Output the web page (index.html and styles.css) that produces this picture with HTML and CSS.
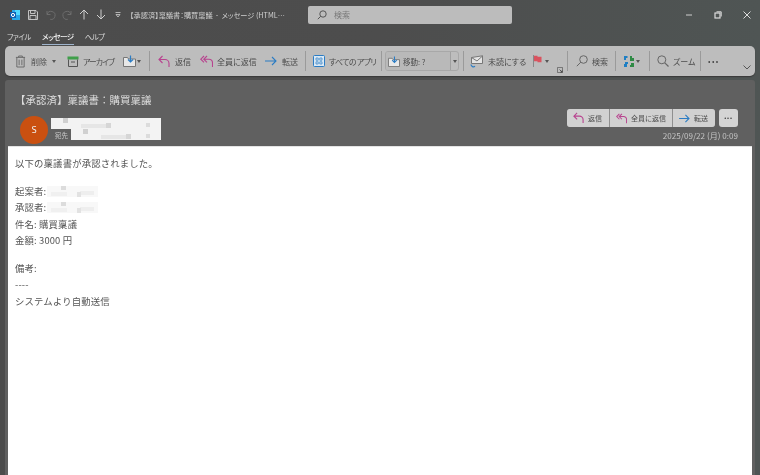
FILE: index.html
```html
<!DOCTYPE html>
<html lang="ja">
<head>
<meta charset="utf-8">
<title>【承認済】稟議書：購買稟議</title>
<link rel="stylesheet" href="styles.css">
</head>
<body>
<div class="window">
  <header class="titlebar">
    <div class="qat">
      <svg class="ol" viewBox="0 0 10 10" width="10" height="10"><rect x="2" y="0" width="8" height="10" fill="#28a8ea"/><rect x="5" y="0" width="5" height="5" fill="#50d9ff"/><rect x="0" y="2" width="6" height="6" fill="#0f5fb0"/><circle cx="3" cy="5" r="1.6" fill="none" stroke="#fff"/></svg>
      <svg class="qi qs" viewBox="0 0 10 10" width="10" height="10"><path d="M.5.5h7.500l1.500 1.500v7.500h-9zM2.500.5v3h4.500v-3M2 9.500v-4h6v4" fill="none" stroke="#cfcfcf" stroke-width=".9"/></svg>
      <svg class="qi qu" viewBox="0 0 10 10" width="10" height="10"><path d="M1 1v3.500h3.500M1.200 4.300a4 4 0 1 1 3 5" fill="none" stroke="#6c6c6c"/></svg>
      <svg class="qi qr" viewBox="0 0 10 10" width="10" height="10"><path d="M9 1v3.500h-3.500M8.800 4.300a4 4 0 1 0-3 5" fill="none" stroke="#6c6c6c"/></svg>
      <svg class="qi qa" viewBox="0 0 10 11" width="10" height="11"><path d="M5 10.500V1M1 5l4-4 4 4" fill="none" stroke="#cfcfcf"/></svg>
      <svg class="qi qd" viewBox="0 0 10 11" width="10" height="11"><path d="M5 .5V10M1 6l4 4 4-4" fill="none" stroke="#cfcfcf"/></svg>
      <svg class="qi qc" viewBox="0 0 6 6" width="6" height="6"><path d="M.5.5h5M1 2.500h4L3 5z" fill="none" stroke="#cfcfcf" stroke-width=".8"/></svg>
    </div>
    <div class="doc-title">【承認済】稟議書：購買稟議&nbsp; - &nbsp;メッセージ (HTML…</div>
    <div class="search">
      <svg viewBox="0 0 10 10" width="10" height="10"><circle cx="6" cy="4" r="3.200" fill="none" stroke="#555"/><path d="M3.700 6.300.8 9.200" stroke="#555"/></svg>
      <span>検索</span>
    </div>
    <div class="winctl">
      <svg viewBox="0 0 10 10" width="10" height="10"><path d="M2 5h6" stroke="#cfcfcf"/></svg>
      <svg viewBox="0 0 10 10" width="10" height="10"><rect x="2" y="3" width="5" height="5" fill="none" stroke="#dcdcdc" stroke-width="1.200"/><path d="M3.500 1.800h4.700v4.700" fill="none" stroke="#dcdcdc"/></svg>
      <svg viewBox="0 0 10 10" width="10" height="10"><path d="M1.500 1.500l7 7M8.500 1.500l-7 7" stroke="#dcdcdc"/></svg>
    </div>
  </header>

  <nav class="tabs">
    <span class="tab">ファイル</span>
    <span class="tab active">メッセージ</span>
    <span class="tab">ヘルプ</span>
  </nav>

  <div class="ribbon">
    <div class="rb w-del"><svg viewBox="0 0 12 14" width="11" height="13"><path d="M1 2.500h10M4 2.500v-1.500h4v1.500M2 2.500v10.500h8V2.500M4.500 5v6M7.500 5v6" fill="none" stroke="#666"/></svg><span>削除</span><i class="caret"></i></div>
    <div class="rb w-arc"><svg viewBox="0 0 12 11" width="12" height="11"><rect x=".5" y=".5" width="11" height="3" fill="#3f9f4a"/><path d="M1.500 3.500v7h9v-7M4 6h4" fill="none" stroke="#555"/></svg><span>アーカイブ</span></div>
    <div class="rb w-mv"><svg viewBox="0 0 13 12" width="13" height="12"><path d="M.5 2.500h4l1 1.500h7v7.500H.5z" fill="#e8e8e8" stroke="#777"/><path d="M7.500 .5v6M5 4.500l2.500 2.500L10 4.500" fill="none" stroke="#2b7cc4" stroke-width="1.200"/></svg><i class="caret"></i></div>
    <b class="sep"></b>
    <div class="rb w-re"><svg viewBox="0 0 12 13" width="12" height="13"><path d="M4.500 1 1 4.500 4.500 8M1 4.500h6a4 4 0 0 1 4 4V12" fill="none" stroke="#b8438f" stroke-width="1.100"/></svg><span>返信</span></div>
    <div class="rb w-ra"><svg viewBox="0 0 13 13" width="13" height="13"><path d="M4 1 .8 4.200 4 7.400M7 1 3.800 4.200 7 7.400M3.800 4.200H9a3.500 3.500 0 0 1 3.500 3.500V12" fill="none" stroke="#b8438f" stroke-width="1.100"/></svg><span>全員に返信</span></div>
    <div class="rb w-fw"><svg viewBox="0 0 12 10" width="12" height="10"><path d="M0 5h11M7 1l4 4-4 4" fill="none" stroke="#2b7cc4" stroke-width="1.100"/></svg><span>転送</span></div>
    <b class="sep"></b>
    <div class="rb w-ap"><svg viewBox="0 0 12 12" width="12" height="12"><rect x=".5" y=".5" width="11" height="11" rx="1" fill="#dbe9f4" stroke="#2b7cc4"/><path d="M3 3h2.200v2.200H3zM6.800 3H9v2.200H6.800zM3 6.800h2.200V9H3zM6.800 6.800H9V9H6.800z" fill="none" stroke="#2b7cc4" stroke-width=".7"/></svg><span>すべての アプリ</span></div>
    <b class="sep"></b>
    <div class="movebox">
      <div class="mv-main"><svg viewBox="0 0 13 12" width="12" height="11"><path d="M.5 2.500h4l1 1.500h7v7.500H.5z" fill="#e8e8e8" stroke="#777"/><path d="M7 .5v6M4.500 4.500 7 7l2.500-2.500" fill="none" stroke="#2b7cc4" stroke-width="1.200"/></svg><span>移動: ?</span></div>
      <div class="mv-drop"><i class="caret"></i></div>
    </div>
    <b class="sep"></b>
    <div class="rb w-un"><svg viewBox="0 0 14 13" width="14" height="13"><path d="M1.500 2.500 12.500.8v7.700h-11z" fill="#e4e4e4" stroke="#777"/><path d="M1.500 2.500 7 6l5.500-5" fill="none" stroke="#777"/><path d="M1 9.500a2.500 2.500 0 0 0 4 1.800" fill="none" stroke="#2b7cc4" stroke-width="1.200"/></svg><span>未読にする</span></div>
    <div class="rb w-fl"><svg viewBox="0 0 9 12" width="9" height="12"><path d="M.5 0v12" stroke="#888"/><path d="M1 .8h3.500v1h4v5.500H4.500v-1H1z" fill="#d9535f"/></svg><i class="caret"></i></div>
    <div class="launch"><svg viewBox="0 0 7 7" width="6" height="6"><path d="M.5 6.500v-6h6v6z" fill="none" stroke="#666"/><path d="M3 3l3 3M4 6h2V4" fill="none" stroke="#444"/></svg></div>
    <b class="sep"></b>
    <div class="rb w-se"><svg viewBox="0 0 12 12" width="12" height="12"><circle cx="7.500" cy="4.500" r="3.800" fill="none" stroke="#666"/><path d="M4.800 7.200.8 11.200" stroke="#666"/></svg><span>検索</span></div>
    <b class="sep"></b>
    <div class="rb w-tr"><svg viewBox="0 0 12 13" width="12" height="13"><path d="M1 1h3.500v2H3v2H1zM2 7h3v2H4v3H1V9h1z" fill="#1e7fc4"/><path d="M7 1h2v2h2v3H7zM8 8h3v4H7v-2h1z" fill="#2f8a45"/></svg><i class="caret"></i></div>
    <b class="sep"></b>
    <div class="rb w-zo"><svg viewBox="0 0 12 12" width="12" height="12"><circle cx="4.800" cy="4.800" r="4" fill="none" stroke="#666"/><path d="M7.800 7.800l3.700 3.700" stroke="#666" stroke-width="1.200"/></svg><span>ズーム</span></div>
    <b class="sep"></b>
    <div class="rb w-mo"><span class="dots">•••</span></div>
    <div class="rb-end"><svg viewBox="0 0 8 5" width="8" height="5"><path d="M.5.5 4 4 7.500.5" fill="none" stroke="#555"/></svg></div>
  </div>

  <main class="msg">
    <div class="msg-head">
      <div class="head-left">
        <h1 class="subject">【承認済】稟議書：購買稟議</h1>
        <div class="sender">
          <div class="avatar">S</div>
          <div class="who">
            <div class="blob blob-name"></div>
            <div class="to"><span>宛先</span><div class="blob blob-to"></div></div>
          </div>
        </div>
      </div>
      <div class="head-right">
        <div class="actions">
          <div class="btn-group">
            <div class="abtn a-re"><svg viewBox="0 0 12 13" width="11" height="12"><path d="M4.500 1 1 4.500 4.500 8M1 4.500h6a4 4 0 0 1 4 4V12" fill="none" stroke="#b8438f" stroke-width="1.200"/></svg><span>返信</span></div>
            <div class="abtn a-ra"><svg viewBox="0 0 13 13" width="11" height="11"><path d="M4 1 .8 4.200 4 7.400M7 1 3.800 4.200 7 7.400M3.800 4.200H9a3.500 3.500 0 0 1 3.500 3.500V12" fill="none" stroke="#b8438f" stroke-width="1.200"/></svg><span>全員に返信</span></div>
            <div class="abtn a-fw"><svg viewBox="0 0 12 10" width="11" height="9"><path d="M0 5h11M7 1l4 4-4 4" fill="none" stroke="#2b7cc4" stroke-width="1.200"/></svg><span>転送</span></div>
          </div>
          <div class="more">•••</div>
        </div>
        <div class="date">2025/09/22 (月) 0:09</div>
      </div>
    </div>
    <div class="msg-body">
      <p class="para">以下の稟議書が承認されました。</p>
      <div class="para">
        <div class="line">起案者:<div class="blob blob-p"></div></div>
        <div class="line">承認者:<div class="blob blob-p"></div></div>
        <div class="line">件名: 購買稟議</div>
        <div class="line">金額: 3000 円</div>
      </div>
      <div class="para">
        <div class="line">備考:</div>
        <div class="line">----</div>
        <div class="line">システムより自動送信</div>
      </div>
    </div>
  </main>
</div>
</body>
</html>
```
FILE: styles.css
```css
* { box-sizing: border-box; }
html, body { margin: 0; height: 100%; }
body {
  font-family: "Noto Sans CJK JP", "Noto Sans", sans-serif;
  overflow: hidden;
  background: #4b4b4b;
}
.window {
  width: 760px;
  height: 475px;
  display: flex;
  flex-direction: column;
  background: linear-gradient(90deg, #4c4c4c 0%, #4d4d4d 50%, #4f5554 100%);
  font-feature-settings: "palt";
  filter: blur(.35px);
}

/* title bar */
.titlebar { height: 29px; display: flex; align-items: center; flex: none; }
.qat { display: flex; align-items: center; width: 130px; padding-left: 10px; flex: none; }
.qat svg { display: block; flex: none; }
.qs { margin-left: 8px; }
.qu { margin-left: 8px; }
.qr { margin-left: 6px; }
.qa { margin-left: 7px; }
.qd { margin-left: 7px; }
.qc { margin-left: 9px; }
.doc-title { width: 178px; flex: none; font-size: 7.200px; color: #d0d0d0; white-space: nowrap; overflow: hidden; }
.search {
  width: 204px; height: 18px; flex: none;
  background: #bcbcbc; border-radius: 2px;
  display: flex; align-items: center; gap: 7px; padding-left: 9px;
  font-size: 8px; color: #777;
}
.winctl { margin-left: 172px; display: flex; gap: 19px; flex: none; }
.winctl svg { display: block; }

/* tabs */
.tabs { height: 16px; flex: none; display: flex; gap: 11px; padding-left: 7px; font-size: 7.500px; letter-spacing: -.5px; color: #d8d8d8; align-items: center; }
.tab { height: 16px; line-height: 15px; }
.tab.active { color: #f2f2f2; font-weight: 500; border-bottom: 1px solid #9fb4cc; height: 15px; margin-top: 1px; line-height: 14px; }

/* ribbon */
.ribbon {
  height: 30px; margin: 1px 5px 0; flex: none;
  background: #bdbdbd; border-radius: 5px;
  display: flex; align-items: center;
  font-size: 8px; color: #4c4c4c;
  padding-left: 10px;
  box-shadow: 0 1px 1px #3a3a3a;
}
.rb { display: flex; align-items: center; flex: none; white-space: nowrap; }
.rb svg { display: block; flex: none; }
.caret { display: block; width: 0; height: 0; border: 2.500px solid transparent; border-top: 3px solid #555; border-bottom: 0; flex: none; }
.sep { display: block; width: 1px; height: 20px; background: #9a9a9a; flex: none; }
.w-del { width: 52px; gap: 5px; }
.w-arc { width: 56px; gap: 4px; }
.w-arc span { letter-spacing: -1.100px; }
.w-mv { width: 26px; gap: 1px; }
.w-re { width: 42px; gap: 5px; margin-left: 8px; }
.w-ra { width: 65px; gap: 4px; }
.w-fw { width: 40px; gap: 5px; }
.w-ap { width: 68px; gap: 4px; margin-left: 7px; }
.w-ap span { letter-spacing: -.7px; }
.movebox { width: 74px; height: 20px; flex: none; margin: 0 4px 0 3px; border: 1px solid #a8a8a8; border-radius: 3px; display: flex; }
.mv-main { flex: 1; display: flex; align-items: center; gap: 3px; padding-left: 2px; font-size: 7.500px; background: #b9b9b9; border-radius: 2px 0 0 2px; }
.mv-main svg { display: block; }
.mv-drop { width: 8px; flex: none; display: flex; align-items: center; justify-content: center; border-left: 1px solid #a0a0a0; }
.w-un { width: 63px; gap: 4px; margin-left: 6px; }
.w-fl { width: 24px; gap: 3px; }
.launch { width: 10px; height: 100%; display: flex; align-items: flex-end; padding-bottom: 3px; justify-content: flex-start; flex: none; }
.launch svg { display: block; }
.w-se { width: 39px; gap: 4px; margin-left: 8px; }
.w-tr { width: 26px; gap: 1px; margin-left: 7px; }
.w-zo { width: 43px; gap: 4px; margin-left: 7px; }
.w-mo { margin-left: 7px; }
.dots { font-size: 7px; letter-spacing: 1.500px; color: #444; line-height: 8px; }
.rb-end { margin-left: auto; align-self: flex-end; padding: 0 4px 6px 0; }
.rb-end svg { display: block; }

/* message */
.msg { flex: 1; margin: 4px 5px 0; display: flex; flex-direction: column; background: #606060; min-height: 0; border-radius: 3px 3px 0 0; }
.msg-head { height: 66px; flex: none; display: flex; justify-content: space-between; padding: 0 17px 0 14px; color: #d8d8d8; }
.subject { margin: 11px 0 0 -4px; font-size: 10.500px; font-weight: 400; line-height: 18px; color: #dcdcdc; white-space: nowrap; font-feature-settings: normal; }
.sender { display: flex; margin-top: 7px; margin-left: 1px; gap: 3px; }
.avatar { width: 28px; height: 28px; border-radius: 50%; background: #ca5010; color: #f0f0f0; font: 9.500px/28px "Noto Sans", sans-serif; text-align: center; flex: none; }
.who { display: flex; flex-direction: column; padding-top: 2px; }
.blob {
  background-color: #f3f3f3;
  background-image:
    linear-gradient(#d0d0d0, #d0d0d0), linear-gradient(#d6d6d6, #d6d6d6), linear-gradient(#dcdcdc, #dcdcdc), linear-gradient(#e6e6e6, #e6e6e6);
  background-repeat: no-repeat;
}
.blob-name { width: 110px; height: 11px; background-size: 5px 5px, 5px 5px, 4px 4px, 26px 4px; background-position: 12px 0, 55px 5px, 95px 5px, 30px 6px; }
.to { display: flex; align-items: center; font-size: 6.500px; color: #c8c8c8; padding-left: 4px; }
.to span { width: 16px; flex: none; }
.blob-to { width: 90px; height: 11px; background-size: 5px 5px, 5px 5px, 4px 4px, 26px 4px; background-position: 12px 0, 55px 5px, 75px 5px, 30px 6px; }
.head-right { display: flex; flex-direction: column; align-items: flex-end; padding-top: 29px; }
.actions { display: flex; gap: 4px; }
.btn-group { display: flex; height: 18px; gap: 1px; background: #8f8f8f; border-radius: 3px; overflow: hidden; }
.abtn { background: #d1d1d1; color: #4c4c4c; font-size: 7px; display: flex; align-items: center; gap: 4px; padding-left: 6px; font-feature-settings: normal; }
.abtn svg { display: block; flex: none; }
.a-re { width: 42px; }
.a-ra { width: 62px; }
.a-fw { width: 42px; }
.more { width: 19px; height: 18px; background: #d4d4d4; border-radius: 3px; color: #333; font-size: 6px; letter-spacing: .8px; line-height: 18px; text-align: center; }
.date { font-size: 8.100px; color: #c4c4c4; margin-top: 3px; line-height: 12px; white-space: nowrap; }

.msg-body { flex: 1; margin: 0 3px; background: #fff; border-top: 1px solid #e4e4e4; padding: 8.400px 7px; font-size: 9.400px; line-height: 16.500px; color: #555; letter-spacing: .15px; font-feature-settings: normal; }
.para { margin: 0 0 11px; }
.line { display: flex; white-space: pre; height: 16.500px; }
.blob-p { width: 51px; height: 11px; margin: 3px 0 0 1px; background-color: #f8f8f8; background-image: linear-gradient(#dcdcdc, #dcdcdc), linear-gradient(#e2e2e2, #e2e2e2), linear-gradient(#eee, #eee), linear-gradient(#f0f0f0, #f0f0f0); background-size: 5px 4px, 4px 5px, 14px 4px, 16px 4px; background-position: 14px 0, 30px 6px, 33px 5px, 4px 6px; }
```
